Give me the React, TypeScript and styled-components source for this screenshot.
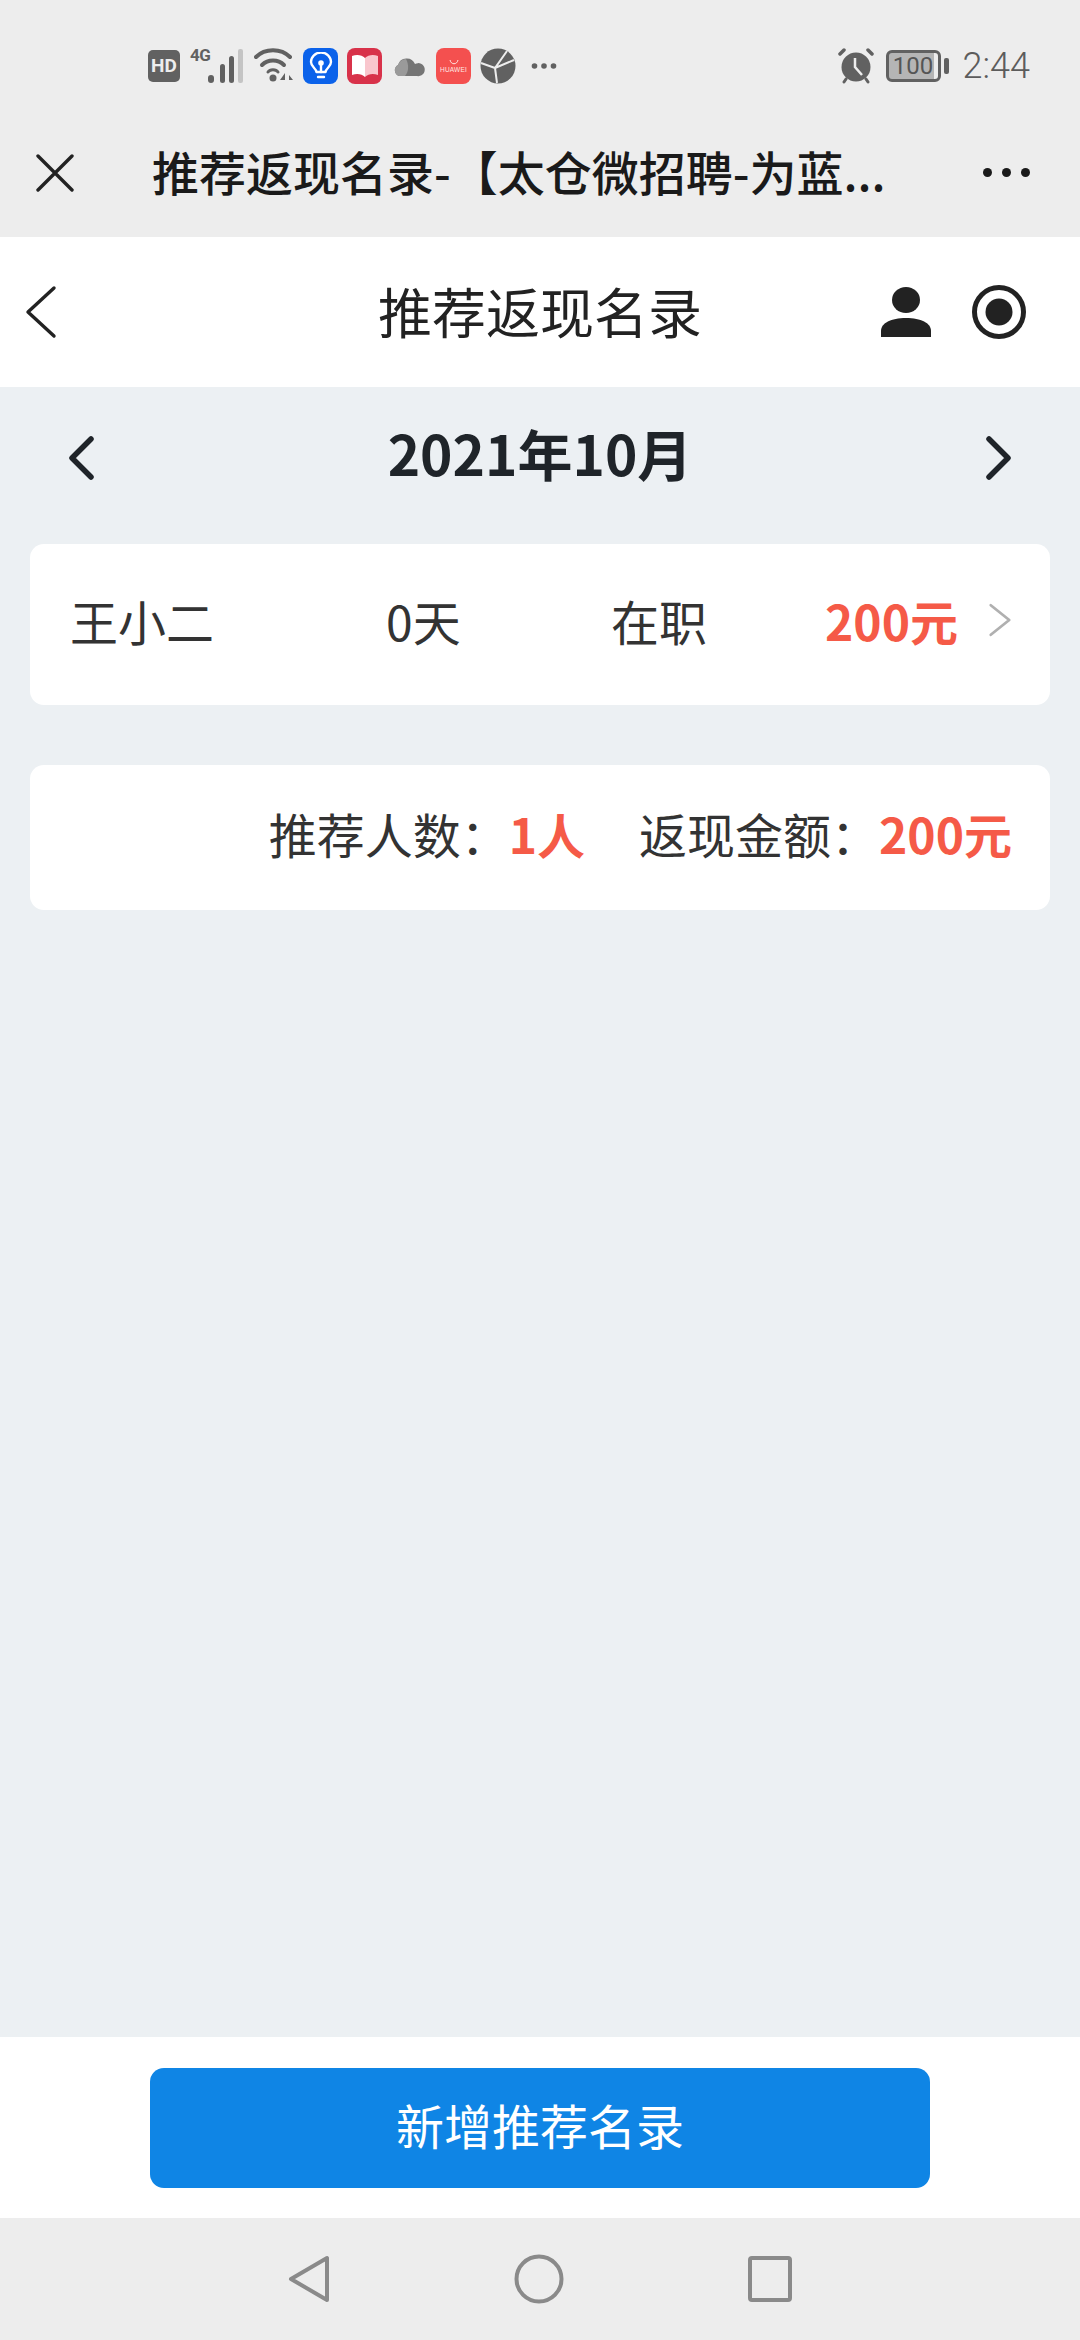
import React from 'react';
import styled, { createGlobalStyle } from 'styled-components';

const GlobalStyle = createGlobalStyle`
  html, body {
    margin: 0;
    padding: 0;
    background: #ecf0f3;
    font-family: "Noto Sans CJK SC", "Liberation Sans", sans-serif;
  }
`;

const Page = styled.div`
  width: 1080px;
  height: 2340px;
  display: flex;
  flex-direction: column;
  overflow: hidden;
  background: #ecf0f3;
`;

// Android status bar
const StatusBar = styled.div`
  height: 84px;
  padding: 24px 50px 0 148px;
  display: flex;
  align-items: center;
  justify-content: space-between;
  background: #ededed;
`;

const StatusGroup = styled.div<{ $gap: number }>`
  display: flex;
  align-items: center;
  gap: ${(p) => p.$gap}px;
`;

const HdBadge = styled.span`
  width: 32px;
  height: 32px;
  border-radius: 5px;
  background: #616161;
  color: #ededed;
  font: 700 19px/32px "Roboto", sans-serif;
  text-align: center;
`;

const SignalWrap = styled.div`
  position: relative;
  width: 56px;
  height: 36px;
`;

const FourG = styled.span`
  position: absolute;
  left: 1px;
  top: -3px;
  font: 700 17px/20px "Roboto", sans-serif;
  letter-spacing: -0.5px;
  color: #616161;
`;

const AppTile = styled.div<{ $bg: string }>`
  width: 35px;
  height: 36px;
  border-radius: 8px;
  background: ${(p) => p.$bg};
  display: flex;
  align-items: center;
  justify-content: center;
  overflow: hidden;
`;

const HuaweiLabel = styled.span`
  font: 400 6.5px/8px "Liberation Sans", sans-serif;
  color: #ffe6e2;
  letter-spacing: 0.2px;
`;

const HuaweiInner = styled.div`
  display: flex;
  flex-direction: column;
  align-items: center;
  gap: 1px;
`;

const BatteryWrap = styled.div`
  display: flex;
  align-items: center;
  gap: 3px;
  margin-left: 11px;
`;

const BatteryBody = styled.div`
  width: 55px;
  height: 32px;
  box-sizing: border-box;
  border: 3px solid #616161;
  border-radius: 6px;
  background: linear-gradient(to right, #b5b5b5 0 92%, transparent 92%);
  font: 400 24px/26px "Roboto", sans-serif;
  color: #555;
  text-align: center;
  overflow: hidden;
`;

const BatteryNub = styled.div`
  width: 5px;
  height: 16px;
  border-radius: 2px;
  background: #616161;
`;

const Clock = styled.span`
  font: 300 36px/40px "Roboto", sans-serif;
  color: #5c5c5c;
  margin-left: 14px;
`;

// WeChat webview title bar
const WebBar = styled.div`
  height: 129px;
  padding: 0 50px 0 36px;
  display: flex;
  align-items: center;
  background: #ededed;
`;

const WebTitle = styled.div`
  flex: 1;
  margin-left: 78px;
  padding-bottom: 3px;
  font-size: 47px;
  font-weight: 500;
  line-height: 60px;
  color: #1a1a1a;
  white-space: nowrap;
`;

const MoreDots = styled.div`
  display: flex;
  gap: 10px;
`;

const Dot = styled.span`
  width: 9px;
  height: 9px;
  border-radius: 50%;
  background: #1a1a1a;
`;

// Page header
const Header = styled.div`
  height: 150px;
  padding: 0 54px;
  display: grid;
  grid-template-columns: 1fr auto 1fr;
  align-items: center;
  background: #fff;
`;

const HeaderLeft = styled.div`
  display: flex;
  margin-left: -29px;
`;

const HeaderTitle = styled.div`
  padding-bottom: 2px;
  font-size: 54px;
  line-height: 70px;
  color: #222;
`;

const HeaderActions = styled.div`
  display: flex;
  align-items: center;
  justify-content: flex-end;
  gap: 41px;
`;

const MonthRow = styled.div`
  height: 134px;
  padding: 0 69px;
  display: flex;
  align-items: center;
  justify-content: space-between;
`;

const MonthLabel = styled.div`
  padding-bottom: 4px;
  font-size: 55px;
  font-weight: 700;
  line-height: 70px;
  color: #1f2429;
`;

const MonthArrow = styled.div`
  display: flex;
  margin-top: 8px;
`;

const Content = styled.div`
  flex: 1;
  padding: 23px 30px 0;
  display: flex;
  flex-direction: column;
  gap: 60px;
`;

const Card = styled.div<{ $h: number }>`
  height: ${(p) => p.$h}px;
  box-sizing: border-box;
  padding-bottom: 10px;
  display: flex;
  align-items: center;
  flex: none;
  background: #fff;
  border-radius: 14px;
  font-size: 48px;
  line-height: 60px;
  color: #333;
`;

const PersonRow = styled(Card)`
  padding-left: 40px;
  padding-right: 38px;
`;

const Cell = styled.div<{ $w: number }>`
  width: ${(p) => p.$w}px;
  flex: none;
`;

const Red = styled.span`
  font-weight: 700;
  color: #f55a47;
`;

const SummaryRow = styled(Card)`
  padding-right: 38px;
  justify-content: flex-end;
`;

const SummaryItem = styled.div`
  margin-left: 54px;
  display: flex;
  align-items: center;
`;

const Footer = styled.div`
  height: 181px;
  display: flex;
  align-items: center;
  justify-content: center;
  background: #fff;
`;

const AddButton = styled.button`
  width: 780px;
  height: 120px;
  border: 0;
  padding: 0 0 8px;
  border-radius: 14px;
  background: #0f85e5;
  color: #fff;
  font-family: inherit;
  font-size: 48px;
  line-height: 60px;
`;

const NavBar = styled.div`
  height: 122px;
  display: flex;
  align-items: center;
  justify-content: center;
  gap: 184px;
  background: #ededed;
`;

const HdIcon = () => <HdBadge>HD</HdBadge>;

const Signal = () => (
  <SignalWrap>
    <FourG>4G</FourG>
    <svg width="56" height="36" viewBox="0 0 56 36">
      <rect x="19" y="27" width="6" height="8" rx="3" fill="#616161" />
      <rect x="31" y="16" width="5" height="19" rx="2.5" fill="#616161" />
      <rect x="40" y="8" width="5" height="27" rx="2.5" fill="#616161" />
      <rect x="49" y="1" width="5" height="34" rx="2" fill="#c4c4c4" />
    </svg>
  </SignalWrap>
);

const Wifi = () => (
  <svg width="40" height="36" viewBox="0 0 40 36" fill="none" stroke="#616161" strokeWidth="4" strokeLinecap="round">
    <path d="M2 9C11 0 27 0 36 9" />
    <path d="M8 17C14 11 24 11 30 17" />
    <path d="M14 24C16 21 22 21 24 24" strokeWidth="3" />
    <circle cx="19" cy="30" r="3.5" fill="#616161" stroke="none" />
    <path d="M31 25L26 32H31V25ZM35 36V27L39 32H35Z" fill="#616161" stroke="none" />
  </svg>
);

const Bulb = () => (
  <AppTile $bg="#0b62ea">
    <svg width="26" height="28" viewBox="0 0 26 28" fill="none" stroke="#fff" strokeWidth="2.4" strokeLinecap="round" strokeLinejoin="round">
      <path d="M8.5 20C8 16 3 15 3 10A10 9.5 0 0 1 23 10C23 15 18 16 17.5 20Z" />
      <path d="M10 25H16" />
      <path d="M13 20V13" />
      <circle cx="13" cy="11" r="1.6" fill="#fff" />
    </svg>
  </AppTile>
);

const BookApp = () => (
  <AppTile $bg="#d8324a">
    <svg width="30" height="28" viewBox="0 0 30 28">
      <path d="M2 4C7 2 12 3 15 6V25C12 22 7 21 2 23Z" fill="#fff" />
      <path d="M28 4C23 2 18 3 15 6V25C18 22 23 21 28 23Z" fill="#f9c6cd" />
    </svg>
  </AppTile>
);

const Cloud = () => (
  <svg width="36" height="24" viewBox="0 0 36 24">
    <path d="M8 22A6 6 0 0 1 7 11A9 9 0 0 1 24 10A6.5 6.5 0 1 1 26 22Z" fill="#757575" />
    <path d="M8 22A6 6 0 0 1 7 11A9 9 0 0 1 15 5C18 10 18 18 14 22Z" fill="#9a9a9a" />
  </svg>
);

const HuaweiApp = () => (
  <AppTile $bg="#f4504f">
    <HuaweiInner>
      <svg width="12" height="6" viewBox="0 0 12 6" fill="none" stroke="#ffe6e2" strokeWidth="1">
        <path d="M2 1C3 6 9 6 10 1" />
      </svg>
      <HuaweiLabel>HUAWEI</HuaweiLabel>
    </HuaweiInner>
  </AppTile>
);

const Globe = () => (
  <svg width="36" height="36" viewBox="0 0 36 36">
    <circle cx="18" cy="18" r="17.5" fill="#616161" />
    <path d="M1 15L15 20L27 3M15 20L17 35M15 20L34 12" fill="none" stroke="#ededed" strokeWidth="2" />
  </svg>
);

const StatusDots = () => (
  <svg width="32" height="8" viewBox="0 0 32 8" fill="#616161">
    <circle cx="9.5" cy="4" r="2.8" />
    <circle cx="19" cy="4" r="2.8" />
    <circle cx="28.5" cy="4" r="2.8" />
  </svg>
);

const Alarm = () => (
  <svg width="38" height="36" viewBox="0 0 38 36">
    <circle cx="19" cy="19" r="14.5" fill="#616161" />
    <path d="M3 6L7 2M35 6L31 2" stroke="#616161" strokeWidth="3.5" strokeLinecap="round" />
    <path d="M9 31L7 34M29 31L31 34" stroke="#616161" strokeWidth="3" strokeLinecap="round" />
    <path d="M18 10V19L25 27" fill="none" stroke="#ededed" strokeWidth="2.5" />
  </svg>
);

const CloseIcon = () => (
  <svg width="38" height="38" viewBox="0 0 38 38" fill="none" stroke="#222" strokeWidth="3.4" strokeLinecap="round">
    <path d="M2 2L36 36M36 2L2 36" />
  </svg>
);

const Chevron = ({ dir, w, h, color, sw }: { dir: 'left' | 'right'; w: number; h: number; color: string; sw: number }) => (
  <svg width={w} height={h} viewBox={`0 0 ${w} ${h}`} fill="none" stroke={color} strokeWidth={sw} strokeLinecap="round" strokeLinejoin="round">
    {dir === 'left' ? (
      <path d={`M${w - 3} 3L3 ${h / 2}L${w - 3} ${h - 3}`} />
    ) : (
      <path d={`M3 3L${w - 3} ${h / 2}L3 ${h - 3}`} />
    )}
  </svg>
);

const PersonIcon = () => (
  <svg width="50" height="50" viewBox="0 0 50 50" fill="#222">
    <ellipse cx="25" cy="13" rx="14" ry="13" />
    <path d="M0 50V44C0 36 10 31 25 31C40 31 50 36 50 44V50Z" />
  </svg>
);

const TargetIcon = () => (
  <svg width="54" height="54" viewBox="0 0 54 54">
    <circle cx="27" cy="27" r="24.5" fill="none" stroke="#222" strokeWidth="5" />
    <circle cx="27" cy="27" r="13.5" fill="#222" />
  </svg>
);

const App: React.FC = () => {
  return (
    <Page>
      <GlobalStyle />
      <StatusBar>
        <StatusGroup $gap={9}>
          <HdIcon />
          <Signal />
          <Wifi />
          <Bulb />
          <BookApp />
          <Cloud />
          <HuaweiApp />
          <Globe />
          <StatusDots />
        </StatusGroup>
        <StatusGroup $gap={0}>
          <Alarm />
          <BatteryWrap>
            <BatteryBody>100</BatteryBody>
            <BatteryNub />
          </BatteryWrap>
          <Clock>2:44</Clock>
        </StatusGroup>
      </StatusBar>

      <WebBar>
        <CloseIcon />
        <WebTitle>推荐返现名录-【太仓微招聘-为蓝...</WebTitle>
        <MoreDots>
          <Dot />
          <Dot />
          <Dot />
        </MoreDots>
      </WebBar>

      <Header>
        <HeaderLeft>
          <Chevron dir="left" w={32} h={54} color="#222" sw={3.4} />
        </HeaderLeft>
        <HeaderTitle>推荐返现名录</HeaderTitle>
        <HeaderActions>
          <PersonIcon />
          <TargetIcon />
        </HeaderActions>
      </Header>

      <MonthRow>
        <MonthArrow>
          <Chevron dir="left" w={25} h={44} color="#1f2429" sw={5.5} />
        </MonthArrow>
        <MonthLabel>2021年10月</MonthLabel>
        <MonthArrow>
          <Chevron dir="right" w={25} h={44} color="#1f2429" sw={5.5} />
        </MonthArrow>
      </MonthRow>

      <Content>
        <PersonRow $h={161}>
          <Cell $w={316}>王小二</Cell>
          <Cell $w={225}>0天</Cell>
          <Cell $w={214}>在职</Cell>
          <Cell $w={163}>
            <Red>200元</Red>
          </Cell>
          <Chevron dir="right" w={26} h={38} color="#b0b0b0" sw={3} />
        </PersonRow>
        <SummaryRow $h={145}>
          <SummaryItem>
            推荐人数：<Red>1人</Red>
          </SummaryItem>
          <SummaryItem>
            返现金额：<Red>200元</Red>
          </SummaryItem>
        </SummaryRow>
      </Content>

      <Footer>
        <AddButton>新增推荐名录</AddButton>
      </Footer>

      <NavBar>
        <svg width="42" height="48" viewBox="0 0 42 48" fill="none" stroke="#8a8a8a" strokeWidth="4" strokeLinejoin="round">
          <path d="M39 3V45L3 24Z" />
        </svg>
        <svg width="50" height="50" viewBox="0 0 50 50" fill="none" stroke="#8a8a8a" strokeWidth="4">
          <circle cx="25" cy="25" r="22.5" />
        </svg>
        <svg width="44" height="46" viewBox="0 0 44 46" fill="none" stroke="#8a8a8a" strokeWidth="4" strokeLinejoin="round">
          <rect x="2" y="2" width="40" height="42" rx="2" />
        </svg>
      </NavBar>
    </Page>
  );
};

export default App;
